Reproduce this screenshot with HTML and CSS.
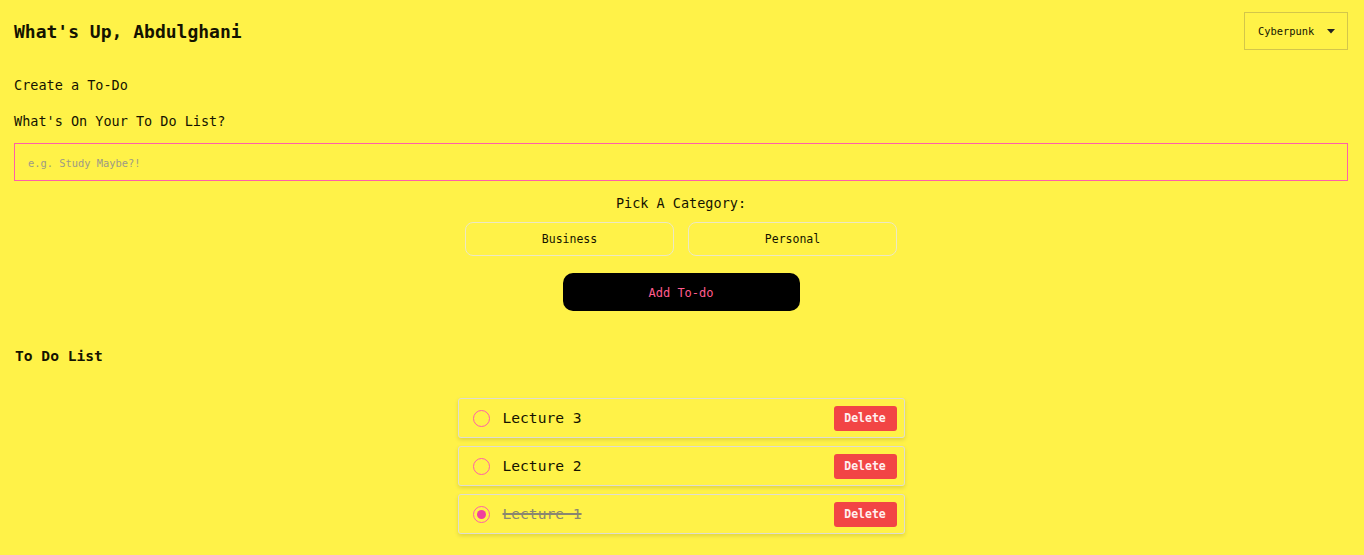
FILE: index.html
```html
<!DOCTYPE html>
<html lang="en">
<head>
<meta charset="utf-8">
<title>Todo</title>
<link rel="stylesheet" href="styles.css">
</head>
<body>
<main class="page">
  <header class="header">
    <h1 class="title">What's Up, Abdulghani</h1>
    <div class="theme-select">
      <span>Cyberpunk</span>
      <svg class="caret" width="8" height="5" viewBox="0 0 8 5"><path d="M0 0H8L4 4.5Z" fill="#222"/></svg>
    </div>
  </header>

  <section class="create">
    <h2 class="label">Create a To-Do</h2>
    <p class="label q">What's On Your To Do List?</p>
    <div class="input"><span class="placeholder">e.g. Study Maybe?!</span></div>
    <p class="label pick">Pick A Category:</p>
    <div class="cats">
      <button class="cat">Business</button>
      <button class="cat">Personal</button>
    </div>
    <div class="add-wrap"><button class="add">Add To-do</button></div>
  </section>

  <h2 class="list-title">To Do List</h2>
  <ul class="list">
    <li class="item">
      <span class="radio"></span>
      <span class="text">Lecture 3</span>
      <button class="del">Delete</button>
    </li>
    <li class="item">
      <span class="radio"></span>
      <span class="text">Lecture 2</span>
      <button class="del">Delete</button>
    </li>
    <li class="item done">
      <span class="radio checked"></span>
      <span class="text">Lecture 1</span>
      <button class="del">Delete</button>
    </li>
  </ul>
</main>
</body>
</html>
```

FILE: styles.css
```css
* { box-sizing: border-box; }
html, body { margin: 0; padding: 0; }
body {
  background: #fff248;
  color: #141300;
  font-family: "DejaVu Sans Mono", "Liberation Mono", monospace;
  height: 555px;
  overflow: hidden;
}
.page { padding: 12px 16px 0 14px; }
.header {
  display: flex;
  justify-content: space-between;
  align-items: center;
  height: 38px;
}
.title {
  margin: 0;
  font-size: 18px;
  font-weight: bold;
  line-height: 38px;
  position: relative;
  top: 1px;
}
.theme-select {
  width: 104px;
  height: 38px;
  border: 1px solid #d3c64a;
  display: flex;
  align-items: center;
  justify-content: space-between;
  padding: 0 12px 0 13px;
  font-size: 10.4px;
}
.caret { margin-top: 1px; }
.label {
  margin: 0;
  font-size: 13.5px;
  font-weight: normal;
  line-height: 20px;
}
.create .label:first-child { margin-top: 25px; }
.q { margin-top: 16px !important; }
.input {
  margin-top: 12px;
  height: 38px;
  border: 1px solid #ff5fa8;
  display: flex;
  align-items: center;
  padding-left: 13px;
}
.placeholder { font-size: 10.4px; color: #9d9a86; padding-top: 1px; }
.pick { text-align: center; margin-top: 12px !important; }
.cats {
  margin-top: 9px;
  display: flex;
  justify-content: center;
  gap: 14px;
}
.cat {
  width: 209px;
  height: 34px;
  background: transparent;
  border: 1.5px solid #ece8c4;
  border-radius: 8px;
  font-family: inherit;
  font-size: 11.5px;
  color: #141300;
}
.add-wrap { display: flex; justify-content: center; margin-top: 17px; }
.add {
  width: 237px;
  height: 38px;
  background: #000;
  border: none;
  border-radius: 10px;
  color: #ff5c8e;
  font-family: inherit;
  font-size: 12px;
  padding: 2px 0 0;
}
.list-title {
  margin: 35px 0 0 1px;
  font-size: 14.6px;
  font-weight: bold;
  line-height: 20px;
}
.list {
  list-style: none;
  margin: 32px auto 0;
  padding: 0;
  width: 447px;
  display: flex;
  flex-direction: column;
  gap: 8px;
}
.item {
  height: 40px;
  border: 1.5px solid #dfddd2;
  border-radius: 3px;
  box-shadow: 0 2px 4px rgba(0,0,0,0.12);
  display: flex;
  align-items: center;
  padding: 0 7px 0 14px;
}
.radio {
  width: 17px;
  height: 17px;
  border-radius: 50%;
  border: 1.5px solid #ff5fa8;
  flex: none;
  display: flex;
  align-items: center;
  justify-content: center;
}
.radio.checked::after {
  content: "";
  width: 9px;
  height: 9px;
  border-radius: 50%;
  background: #f0409e;
}
.text {
  margin-left: 13px;
  font-size: 14.6px;
  line-height: 18px;
  padding-bottom: 1px;
  flex: 1;
}
.done .text { color: #8a8770; text-decoration: line-through; text-decoration-thickness: 1.5px; }
.del {
  width: 63px;
  height: 25px;
  background: #f24545;
  color: #fff0f0;
  border: none;
  border-radius: 3px;
  font-family: inherit;
  font-size: 11.5px;
  font-weight: bold;
  padding: 0;
}
```
